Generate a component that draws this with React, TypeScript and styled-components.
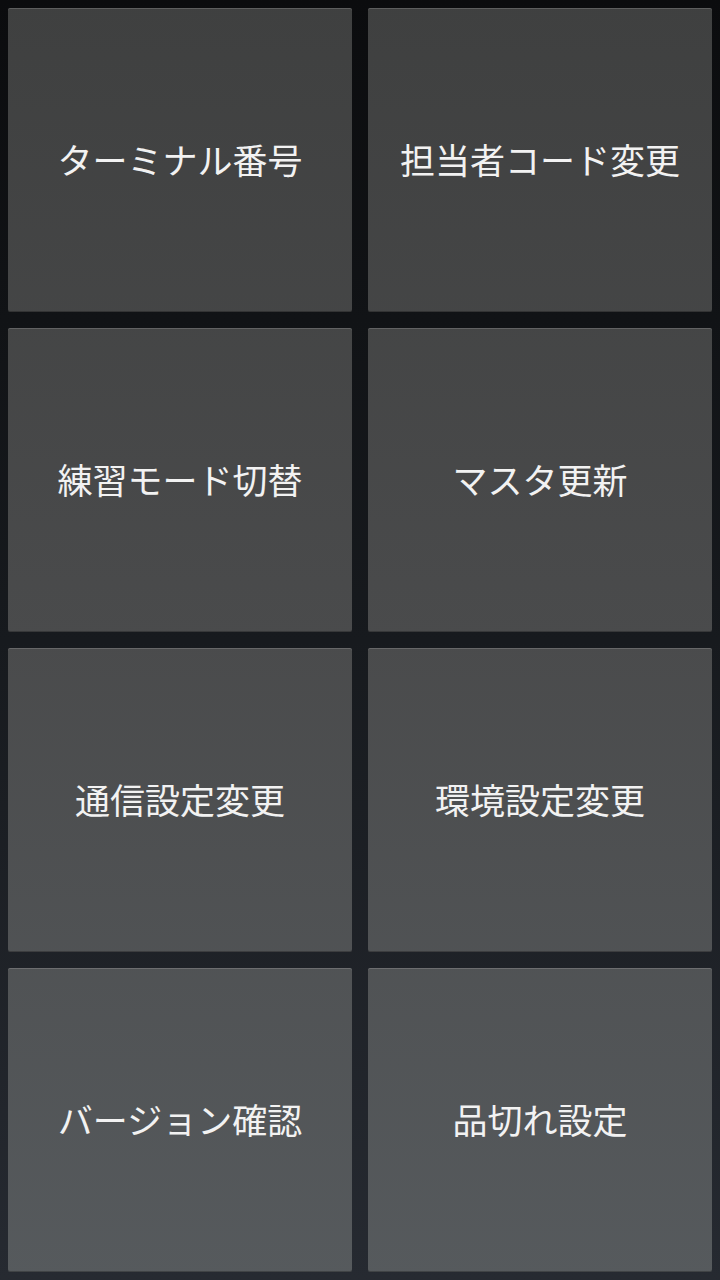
import React from "react";
import styled, { createGlobalStyle } from "styled-components";

const GlobalStyle = createGlobalStyle`
  html, body {
    margin: 0;
    padding: 0;
    background: #0b0c0e;
  }
  * { box-sizing: border-box; }
`;

const Screen = styled.div`
  width: 720px;
  height: 1280px;
  padding: 8px;
  display: grid;
  grid-template-columns: repeat(2, 1fr);
  grid-template-rows: repeat(4, 1fr);
  gap: 16px;
  background: linear-gradient(180deg, #0b0c0e 0%, #171a1e 50%, #262a31 100%);
`;

const Tile = styled.button`
  display: flex;
  align-items: center;
  justify-content: center;
  border: none;
  border-radius: 2px;
  padding: 0 0 4px 0;
  margin: 0;
  background: linear-gradient(180deg, #3f4040 0px, #4a4b4c 640px, #565a5d 1280px);
  background-attachment: fixed;
  box-shadow: inset 0 1px 0 rgba(255, 255, 255, 0.16),
    inset 0 -1px 0 rgba(0, 0, 0, 0.25);
  color: #f2f2f2;
  font-family: "Noto Sans CJK JP", "Noto Sans", sans-serif;
  font-size: 35px;
  font-weight: 400;
  line-height: 1;
  letter-spacing: 0;
  cursor: pointer;
`;

const items = [
  "ターミナル番号",
  "担当者コード変更",
  "練習モード切替",
  "マスタ更新",
  "通信設定変更",
  "環境設定変更",
  "バージョン確認",
  "品切れ設定",
];

export default function App() {
  return (
    <>
      <GlobalStyle />
      <Screen>
        {items.map((t) => (
          <Tile key={t}>{t}</Tile>
        ))}
      </Screen>
    </>
  );
}
